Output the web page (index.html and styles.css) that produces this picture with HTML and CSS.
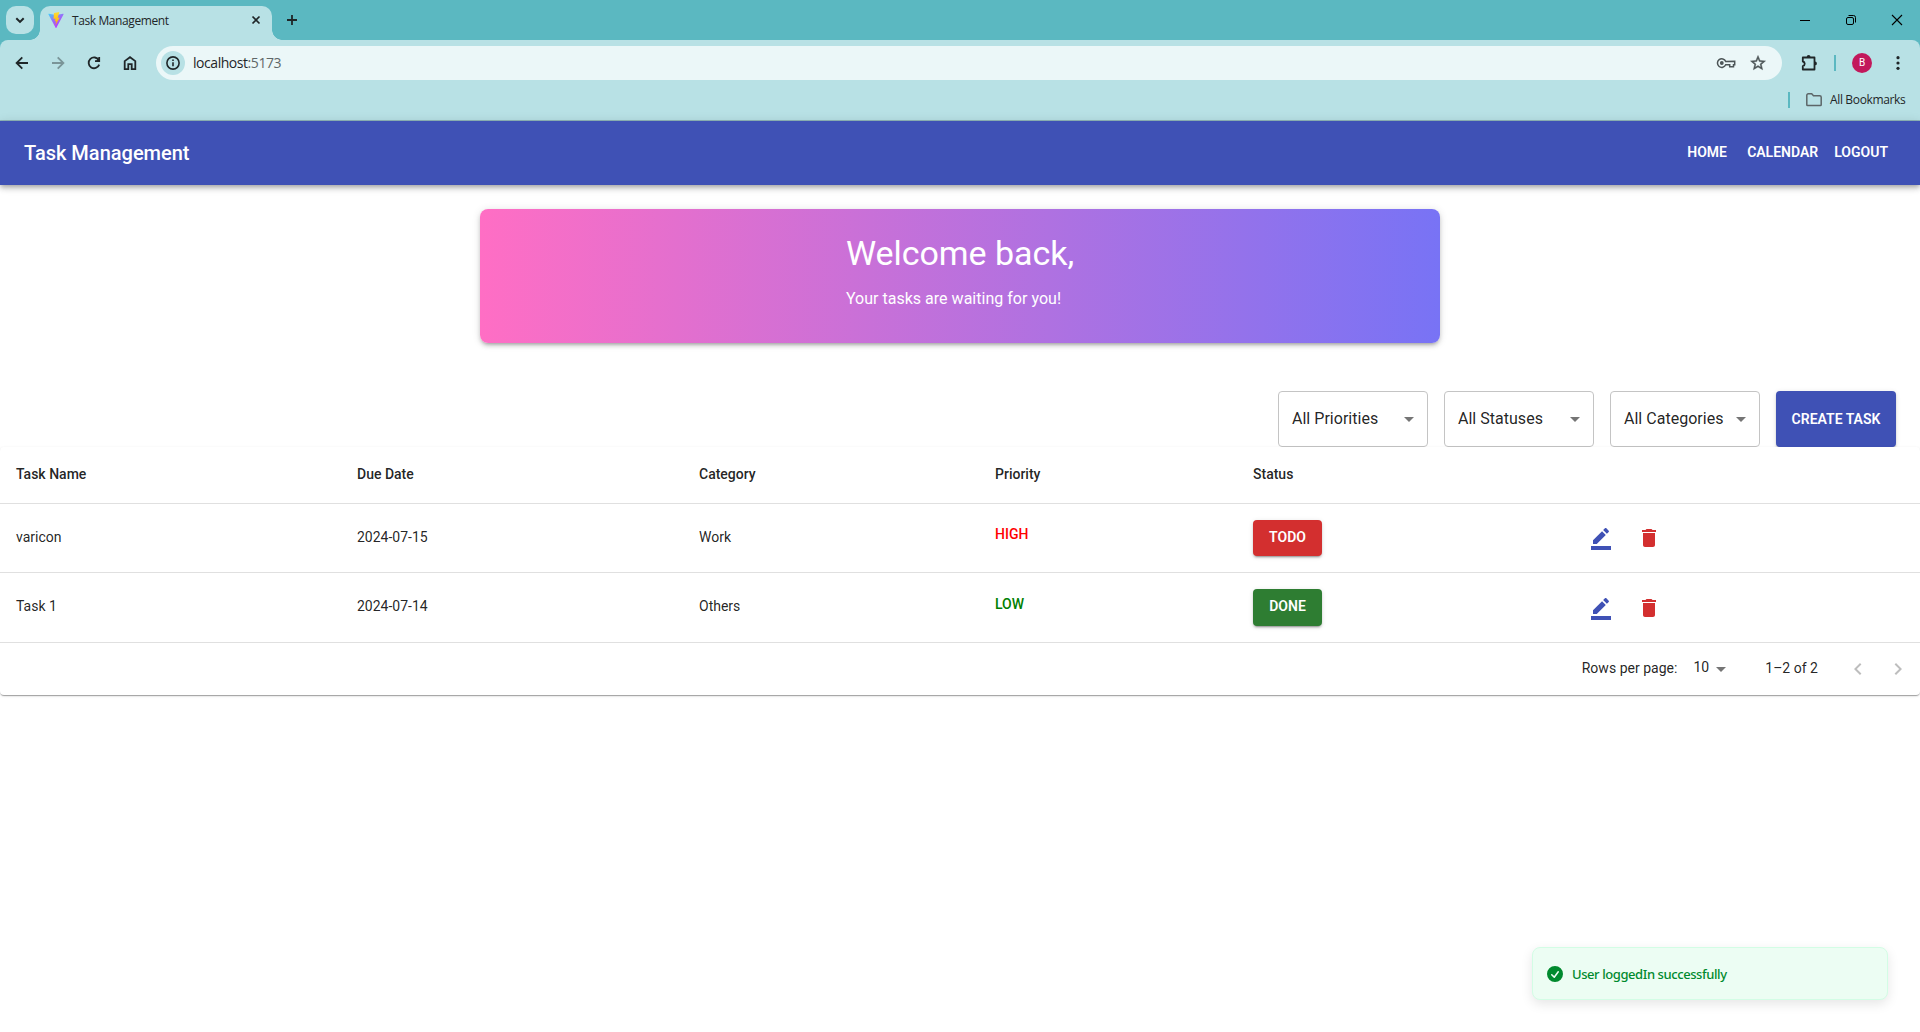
FILE: index.html
```html
<!DOCTYPE html>
<html lang="en">
<head>
<meta charset="utf-8">
<title>Task Management</title>
<link rel="stylesheet" href="styles.css">
</head>
<body>
<div class="browser">
  <div class="tabstrip">
    <div class="tab-search"><svg width="16" height="16" viewBox="0 0 16 16"><path d="M4.3 6.2 8 9.9l3.7-3.7" fill="none" stroke="currentColor" stroke-width="2"/></svg></div>
    <div class="tab">
      <svg class="favicon" width="16" height="16" viewBox="0 0 32 32">
        <defs>
          <linearGradient id="vite-body" x1="0" y1="0" x2=".6" y2="1"><stop offset="0" stop-color="#41d1ff"/><stop offset=".5" stop-color="#9b6cf8"/><stop offset="1" stop-color="#bd34fe"/></linearGradient>
          <linearGradient id="vite-bolt" x1="0" y1="0" x2="0" y2="1"><stop offset="0" stop-color="#ffdd35"/><stop offset="1" stop-color="#ffa800"/></linearGradient>
        </defs>
        <path d="M31 5 17 31a1 1 0 0 1-2 0L1 5c-.5-1 .2-1.7 1-1.500L16 6l14-2.500c.8-.2 1.500.5 1 1.500z" fill="url(#vite-body)"/>
        <path d="M22.500 0 12 2.200 11 14l4-1-1.500 6 3-1-2 9 9-16-4 .8z" fill="url(#vite-bolt)"/>
      </svg>
      <span class="tab-title">Task Management</span>
      <svg class="tab-close" width="16" height="16" viewBox="0 0 16 16"><path d="m4.500 4.500 7 7m0-7-7 7" stroke="currentColor" stroke-width="1.700"/></svg>
    </div>
    <svg class="new-tab" width="16" height="16" viewBox="0 0 16 16"><path d="M8 3v10M3 8h10" stroke="currentColor" stroke-width="1.800"/></svg>
    <div class="window-controls">
      <svg width="46" height="40" viewBox="0 0 46 40"><path d="M18 20.500h10" stroke="#000"/></svg>
      <svg width="46" height="40" viewBox="0 0 46 40" fill="none" stroke="#000"><rect x="18.500" y="17.500" width="7" height="7" rx="1.500"/><path d="M20.500 15.500h5a2 2 0 0 1 2 2v5"/></svg>
      <svg width="46" height="40" viewBox="0 0 46 40"><path d="m18 15 10 10m0-10L18 25" stroke="#000" stroke-width="1.100"/></svg>
    </div>
  </div>
  <div class="toolbar">
    <div class="nav-icons">
      <svg width="36" height="36" viewBox="0 0 36 36"><path d="M24 18H13m5.300-5.700L12.600 18l5.700 5.700"/></svg>
      <svg class="disabled" width="36" height="36" viewBox="0 0 36 36"><path d="M12 18h11m-5.300-5.700 5.700 5.700-5.700 5.700"/></svg>
      <svg width="36" height="36" viewBox="0 0 36 36"><path d="M22.800 15.200A5.400 5.400 0 1 0 23.200 19.600"/><path d="M24 12v5h-5z" fill="currentColor" stroke="none"/><path d="M23.200 12v4.200H19"/></svg>
      <svg width="36" height="36" viewBox="0 0 36 36"><path d="M12.700 16.100 18 12.200l5.300 3.900v8h-3.600v-5h-3.400v5h-3.600z"/></svg>
    </div>
    <div class="address">
      <div class="site-info"><svg width="16" height="16" viewBox="0 0 16 16"><circle cx="8" cy="8" r="6.100" fill="none" stroke="currentColor" stroke-width="1.600"/><path d="M8 7.200v4M8 4.500v1.600" stroke="currentColor" stroke-width="1.600"/></svg></div>
      <span class="url">localhost<span class="port">:5173</span></span>
      <svg class="key" width="20" height="16" viewBox="0 0 20 16"><g fill="none" stroke="currentColor" stroke-width="1.500"><path d="M9.700 6.400A4.300 4.300 0 1 0 9.700 9.800h4v2h3.800v-2h1.200V6.300z"/></g><circle cx="5.800" cy="8" r="1.900" fill="currentColor"/></svg>
      <svg class="star" width="18" height="18" viewBox="0 0 24 24"><path d="m22 9.240-7.190-.62L12 2 9.190 8.630 2 9.240l5.460 4.730L5.820 21 12 17.270 18.180 21l-1.630-7.030L22 9.240zM12 15.400l-3.760 2.270 1-4.280-3.320-2.880 4.380-.38L12 6.100l1.710 4.040 4.380.38-3.320 2.880 1 4.280L12 15.400z" fill="currentColor" stroke="currentColor" stroke-width=".6"/></svg>
    </div>
    <svg class="puzzle" width="20" height="20" viewBox="0 0 20 20"><path d="M3.800 4.500h11.700v12H3.800v-3.300a2.400 2.400 0 0 0 0-4.700z" fill="none" stroke="currentColor" stroke-width="1.800" stroke-linejoin="round"/><path d="M7.700 4a1.900 1.900 0 0 1 3.800 0zM16 8.500a1.900 1.900 0 0 1 0 3.800z" fill="currentColor"/></svg>
    <span class="divider"></span>
    <span class="avatar">B</span>
    <svg class="menu" width="16" height="16" viewBox="0 0 16 16" fill="currentColor"><circle cx="8" cy="2.700" r="1.600"/><circle cx="8" cy="8" r="1.600"/><circle cx="8" cy="13.300" r="1.600"/></svg>
  </div>
  <div class="bookmarks">
    <span class="divider"></span>
    <svg width="16" height="14" viewBox="0 0 16 14"><path d="M.8 11.700V2.300a1.500 1.500 0 0 1 1.500-1.500h3.400l1.800 2h6.200a1.500 1.500 0 0 1 1.500 1.500v7.400a.8.8 0 0 1-.8.800H1.600a.8.800 0 0 1-.8-.8z" fill="none" stroke="#5c6668" stroke-width="1.500"/></svg>
    <span class="bookmarks-label">All Bookmarks</span>
  </div>
</div>

<header class="appbar">
  <div class="brand">Task Management</div>
  <nav class="links"><a>Home</a><a>Calendar</a><a>Logout</a></nav>
</header>

<main>
  <section class="banner">
    <div>
      <h1>Welcome back,</h1>
      <p>Your tasks are waiting for you!</p>
    </div>
  </section>

  <div class="filters">
    <div class="select">All Priorities<svg width="24" height="24" viewBox="0 0 24 24"><path d="m7 10 5 5 5-5z"/></svg></div>
    <div class="select">All Statuses<svg width="24" height="24" viewBox="0 0 24 24"><path d="m7 10 5 5 5-5z"/></svg></div>
    <div class="select">All Categories<svg width="24" height="24" viewBox="0 0 24 24"><path d="m7 10 5 5 5-5z"/></svg></div>
    <button class="btn create">Create Task</button>
  </div>

  <section class="paper">
    <table>
      <colgroup><col class="c-name"><col class="c-date"><col class="c-category"><col class="c-priority"><col class="c-status"><col></colgroup>
      <thead><tr><th>Task Name</th><th>Due Date</th><th>Category</th><th>Priority</th><th>Status</th><th></th></tr></thead>
      <tbody>
        <tr>
          <td>varicon</td><td>2024-07-15</td><td>Work</td>
          <td><p class="priority high">HIGH</p></td>
          <td class="status"><button class="btn todo">Todo</button></td>
          <td class="controls"><div class="actions">
            <svg class="edit" width="24" height="24" viewBox="0 0 24 24"><path d="M22 24H2v-4h20v4zM13.060 5.190l3.750 3.750L7.750 18H4v-3.750l9.060-9.060zm4.820 2.680-3.750-3.750 1.830-1.830c.39-.39 1.020-.39 1.410 0l2.340 2.340c.39.390.39 1.020 0 1.410l-1.830 1.830z"/></svg>
            <svg class="delete" width="24" height="24" viewBox="0 0 24 24"><path d="M6 19c0 1.100.9 2 2 2h8c1.100 0 2-.9 2-2V7H6v12zM19 4h-3.500l-1-1h-5l-1 1H5v2h14V4z"/></svg>
          </div></td>
        </tr>
        <tr>
          <td>Task 1</td><td>2024-07-14</td><td>Others</td>
          <td><p class="priority low">LOW</p></td>
          <td class="status"><button class="btn done">Done</button></td>
          <td class="controls"><div class="actions">
            <svg class="edit" width="24" height="24" viewBox="0 0 24 24"><path d="M22 24H2v-4h20v4zM13.060 5.190l3.750 3.750L7.750 18H4v-3.750l9.060-9.060zm4.820 2.680-3.750-3.750 1.830-1.830c.39-.39 1.020-.39 1.410 0l2.340 2.340c.39.390.39 1.020 0 1.410l-1.830 1.830z"/></svg>
            <svg class="delete" width="24" height="24" viewBox="0 0 24 24"><path d="M6 19c0 1.100.9 2 2 2h8c1.100 0 2-.9 2-2V7H6v12zM19 4h-3.500l-1-1h-5l-1 1H5v2h14V4z"/></svg>
          </div></td>
        </tr>
      </tbody>
    </table>
    <div class="pagination">
      <span class="label">Rows per page:</span>
      <span class="page-size"><span class="count">10</span><svg width="24" height="24" viewBox="0 0 24 24"><path d="m7 10 5 5 5-5z"/></svg></span>
      <span class="label range">1–2 of 2</span>
      <svg class="pager" width="24" height="24" viewBox="0 0 24 24"><path d="M15.410 16.590 10.830 12l4.580-4.590L14 6l-6 6 6 6z"/></svg>
      <svg class="pager" width="24" height="24" viewBox="0 0 24 24"><path d="M8.590 16.590 13.170 12 8.590 7.410 10 6l6 6-6 6z"/></svg>
    </div>
  </section>
</main>

<div class="toast">
  <svg width="20" height="20" viewBox="0 0 20 20"><path fill="currentColor" fill-rule="evenodd" d="M10 18a8 8 0 1 0 0-16 8 8 0 0 0 0 16zm3.857-9.809a.75.75 0 0 0-1.214-.882l-3.483 4.790-1.880-1.880a.75.75 0 1 0-1.060 1.061l2.500 2.500a.75.75 0 0 0 1.137-.089l4-5.500z"/></svg>
  <span>User loggedIn successfully</span>
</div>
</body>
</html>
```
FILE: styles.css
```css
* { box-sizing: border-box; }
body {
  margin: 0;
  height: 1032px;
  overflow: hidden;
  background: #fff;
  color: rgba(0, 0, 0, .87);
  font: 14px/1.43 Roboto, sans-serif;
}
svg { display: block; flex: none; }

/* Browser frame */
.browser {
  height: 121px;
  background: #5bb8c1;
  border-bottom: 1px solid #92b8bb;
  color: #1f2628;
  font-family: "Open Sans", "Noto Sans", sans-serif;
}
.tabstrip { display: flex; height: 40px; padding-left: 6px; }
.tab-search {
  display: grid;
  place-items: center;
  width: 28px;
  height: 28px;
  margin: 6px 6px 0 0;
  border-radius: 10px;
  background: #b8e1e5;
}
.tab {
  position: relative;
  display: flex;
  align-items: center;
  width: 232px;
  height: 34px;
  margin-top: 6px;
  padding: 0 8px 6px;
  border-radius: 10px 10px 0 0;
  background: #b8e1e5;
}
.tab::before, .tab::after {
  content: "";
  position: absolute;
  bottom: 0;
  width: 10px;
  height: 10px;
}
.tab::before { left: -10px; background: radial-gradient(circle at 0 0, transparent 9.500px, #b8e1e5 10px); }
.tab::after { right: -10px; background: radial-gradient(circle at 100% 0, transparent 9.500px, #b8e1e5 10px); }
.tab-title { flex: 1; margin-left: 8px; padding-top: 1px; font-size: 12px; letter-spacing: -.4px; }
.new-tab { margin: 12px 0 0 12px; }
.window-controls { display: flex; margin-left: auto; }
.toolbar {
  display: flex;
  align-items: center;
  height: 46px;
  padding: 0 14px 0 4px;
  border-radius: 8px 8px 0 0;
  background: #b8e1e5;
}
.nav-icons { display: flex; fill: none; stroke: currentColor; stroke-width: 1.800; }
.nav-icons .disabled { opacity: .4; }
.address {
  display: flex;
  align-items: center;
  width: 1626px;
  height: 34px;
  margin-left: 8px;
  padding: 0 15px 0 5px;
  border-radius: 17px;
  background: #ebf7f8;
}
.site-info {
  display: grid;
  place-items: center;
  width: 24px;
  height: 24px;
  border-radius: 50%;
  background: #b8e1e5;
}
.url { flex: 1; margin-left: 8px; font-size: 14px; letter-spacing: -.45px; }
.port { color: #5f6769; }
.key, .star { color: #4c5557; }
.star { margin-left: 13px; }
.puzzle { margin-left: 17px; }
.divider { width: 2px; height: 16px; background: #5bb8c1; }
.toolbar .divider { margin-left: 15px; }
.avatar {
  width: 20px;
  height: 20px;
  margin: 0 18px 0 16px;
  border-radius: 50%;
  background: #c2185b;
  color: #fff;
  font: 10px/20px Roboto, sans-serif;
  text-align: center;
}
.bookmarks {
  display: flex;
  align-items: center;
  justify-content: flex-end;
  height: 34px;
  padding: 0 15px 6px 0;
  background: #b8e1e5;
}
.bookmarks svg { margin: 0 8px 0 16px; }
.bookmarks-label { width: 75px; font-size: 12px; letter-spacing: -.35px; white-space: nowrap; }

/* Application bar */
.appbar {
  position: relative;
  display: flex;
  align-items: center;
  justify-content: space-between;
  height: 64px;
  padding: 0 24px;
  background: #3f51b5;
  color: #fff;
  box-shadow: 0 2px 4px -1px rgba(0,0,0,.2), 0 4px 5px rgba(0,0,0,.14), 0 1px 10px rgba(0,0,0,.12);
}
.brand { font-size: 20px; font-weight: 500; line-height: 32px; letter-spacing: 0; }
.links { display: flex; padding-bottom: 1px; }
.links a {
  min-width: 64px;
  padding: 6px 8px;
  font-weight: 600;
  line-height: 24.500px;
  letter-spacing: 0;
  text-align: center;
  text-transform: uppercase;
}

.banner {
  display: flex;
  justify-content: center;
  width: 960px;
  height: 134px;
  margin: 24px auto 48px;
  padding: 23px 24px 24px;
  border-radius: 8px;
  background: linear-gradient(to right, #ff6ec4, #7873f5);
  color: #fff;
  box-shadow: 0 3px 3px -2px rgba(0,0,0,.2), 0 3px 4px rgba(0,0,0,.14), 0 1px 8px rgba(0,0,0,.12);
}
.banner h1 { margin: 0 0 13px; font-size: 34px; font-weight: 400; line-height: 42px; letter-spacing: -.04px; }
.banner p { margin: 0; font-size: 16px; font-weight: 400; line-height: 24px; letter-spacing: .02px; }

/* Filters */
.filters { display: flex; justify-content: flex-end; gap: 16px; padding-right: 24px; }
.select {
  display: flex;
  align-items: center;
  justify-content: space-between;
  width: 150px;
  height: 56px;
  padding: 0 6px 0 13px;
  border: 1px solid #c4c4c4;
  border-radius: 4px;
  font-size: 16px;
  letter-spacing: .02px;
  white-space: nowrap;
}
.select svg, .page-size svg { fill: rgba(0, 0, 0, .54); }
.btn {
  display: block;
  min-width: 64px;
  padding: 6px 16px;
  border: 0;
  border-radius: 4px;
  color: #fff;
  font: 600 14px/24px Roboto, sans-serif;
  letter-spacing: 0;
  text-transform: uppercase;
  box-shadow: 0 3px 1px -2px rgba(0,0,0,.2), 0 2px 2px rgba(0,0,0,.14), 0 1px 5px rgba(0,0,0,.12);
}
.create { width: 120px; padding: 0 0 1px; background: #3f51b5; white-space: nowrap; }
.todo, .done { width: 69px; padding: 5px 0 7px; }
.todo { height: 36px; background: #d32f2f; }
.done { height: 37px; padding-bottom: 8px; background: #2e7d32; }

/* Task table */
.paper {
  position: relative;
  border-radius: 4px;
  background: #fff;
  box-shadow: 0 2px 1px -1px rgba(0,0,0,.2), 0 1px 1px rgba(0,0,0,.14), 0 1px 3px rgba(0,0,0,.12);
}
table { width: 100%; table-layout: fixed; border-collapse: separate; border-spacing: 0; }
.c-name { width: 341px; }
.c-date { width: 342px; }
.c-category { width: 296px; }
.c-priority { width: 258px; }
.c-status { width: 328px; }
th, td {
  padding: 15px 16px 17px;
  border-bottom: 1px solid #e0e0e0;
  font-weight: 400;
  letter-spacing: 0;
  text-align: left;
  vertical-align: middle;
}
th { font-weight: 500; line-height: 24px; }
.status { padding: 16px; }
.controls { padding: 0 16px; }
.priority { margin: 0 0 6px; font-weight: 500; line-height: 20px; letter-spacing: 0; }
.high { color: #f00; }
.low { color: #008000; }
.actions { display: flex; gap: 24px; padding-left: 8px; }
.edit { fill: #3f51b5; }
.delete { fill: #d32f2f; }
.pagination { display: flex; align-items: center; justify-content: flex-end; height: 52px; padding-right: 10px; letter-spacing: .02px; }
.label { padding-bottom: 2px; }
.page-size { display: flex; align-items: center; margin: 0 32px 0 16px; }
.count { padding-bottom: 3px; }
.pager { fill: rgba(0, 0, 0, .26); }
.range { margin-right: 28px; }
.pager + .pager { margin-left: 16px; }

/* Notification */
.toast {
  position: absolute;
  right: 32px;
  bottom: 32px;
  display: flex;
  align-items: center;
  width: 356px;
  height: 53px;
  padding: 0 12px;
  border: 1px solid #d3fde5;
  border-radius: 8px;
  background: #ecfdf3;
  color: #008a2e;
  font: 500 13px/19.500px "Noto Sans", sans-serif;
  letter-spacing: -.42px;
  box-shadow: 0 4px 12px rgba(0,0,0,.1);
}
.toast span { margin-left: 7px; padding-top: 2px; }
```
